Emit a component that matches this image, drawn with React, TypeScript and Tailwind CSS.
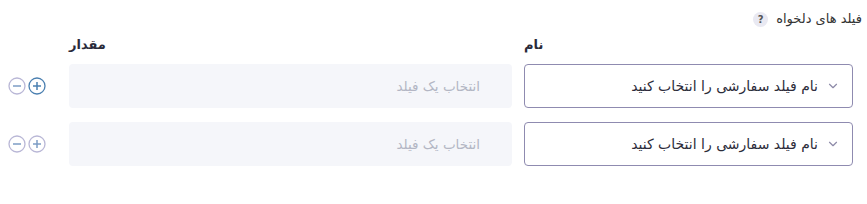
import { ChevronDown } from "lucide-react";

function CircleBtn({ sign, active }: { sign: "+" | "-"; active?: boolean }) {
  const stroke = active ? "#4a7fb0" : "#b9b7d6";
  const line = active ? "#4a7fb0" : "#7d9cc4";
  return (
    <svg width="18" height="18" viewBox="0 0 18 18" className="block">
      <circle cx="9" cy="9" r="8" fill="white" stroke={stroke} strokeWidth="1.3" />
      <line x1="5" y1="9" x2="13" y2="9" stroke={line} strokeWidth="1.5" />
      {sign === "+" && <line x1="9" y1="5" x2="9" y2="13" stroke={line} strokeWidth="1.5" />}
    </svg>
  );
}

function Row({ active }: { active?: boolean }) {
  return (
    <div className="flex items-center gap-3">
      <div className="w-[329px] h-[44px] shrink-0 rounded border border-[#8f8bb0] bg-white flex items-center pr-[12px] pl-3 gap-2">
        <ChevronDown className="w-[14px] h-[14px] text-[#8d8aa8]" strokeWidth={2} />
        <span className="text-[14px] text-[#2c2c3a]">نام فیلد سفارشی را انتخاب کنید</span>
      </div>
      <div className="w-[443px] h-[44px] shrink-0 rounded bg-[#f5f6fa] flex items-center pr-[32px]">
        <span className="text-[13.5px] text-[#b3b6c4]">انتخاب یک فیلد</span>
      </div>
      <div className="flex items-center gap-[2px] mr-[11px]">
        <CircleBtn sign="+" active={active} />
        <CircleBtn sign="-" />
      </div>
    </div>
  );
}

export default function App() {
  return (
    <div dir="rtl" className="w-[867px] h-[204px] bg-white pr-[14px] pt-[10px]" style={{ fontFamily: '"DejaVu Sans", sans-serif' }}>
      <div className="flex items-center gap-[8px] -mr-[9px] h-[18px]">
        <span className="text-[13px] text-[#333]">فیلد های دلخواه</span>
        <span className="w-[15px] h-[15px] rounded-full bg-[#e9e9f2] text-[10px] font-bold text-[#555] flex items-center justify-center">?</span>
      </div>
      <div className="flex gap-3 mt-[8px] mb-[10px] h-[18px] items-center">
        <div className="w-[329px] text-left text-[13px] font-bold text-[#2a2a3a]">نام</div>
        <div className="w-[443px] text-left text-[13px] font-bold text-[#2a2a3a] -ml-[1px]">مقدار</div>
      </div>
      <div className="flex flex-col gap-[14px]">
        <Row active />
        <Row />
      </div>
    </div>
  );
}
